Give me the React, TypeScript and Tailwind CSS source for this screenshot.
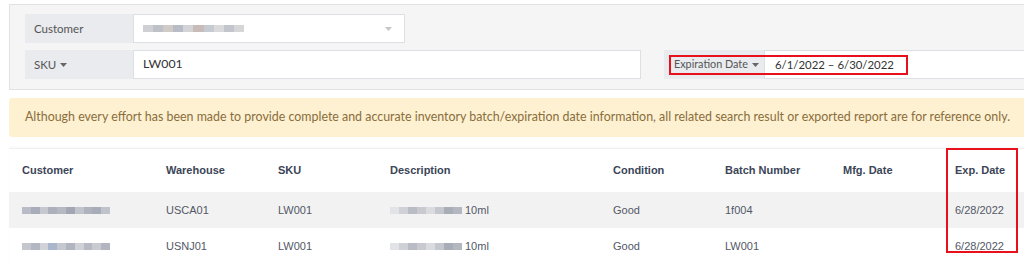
import React from "react";

const Blur = ({ w, colors }: { w: number; colors: string[] }) => (
  <span className="inline-flex h-[8px] items-center blur-[0.6px]" style={{ width: w }}>
    {colors.map((c, i) => (
      <span key={i} className="h-[7px] flex-1" style={{ backgroundColor: c }} />
    ))}
  </span>
);

const Caret = ({ className = "" }: { className?: string }) => (
  <svg width="7" height="4" viewBox="0 0 7 4" className={className}>
    <path d="M0 0 L7 0 L3.5 4 Z" fill="currentColor" />
  </svg>
);

const cols = [
  "w-[144px]",
  "w-[112px]",
  "w-[112px]",
  "w-[223px]",
  "w-[112px]",
  "w-[118px]",
  "w-[112px]",
  "w-[80px]",
];

const headers = ["Customer", "Warehouse", "SKU", "Description", "Condition", "Batch Number", "Mfg. Date", "Exp. Date"];

const rows = [
  {
    bg: "bg-[#f2f2f2]",
    wh: "USCA01",
    batch: "1f004",
    cust: ["#b9bcc6", "#a9adb9", "#c6c8cf", "#adb1bc", "#b6b9c2", "#a3a7b3", "#c2c4cb", "#b0b3bd", "#a8acb8", "#c0c3cb"],
  },
  {
    bg: "bg-white",
    wh: "USNJ01",
    batch: "LW001",
    cust: ["#c4c7ce", "#b3b7c1", "#d2d3d8", "#a9b6cc", "#c6c8cf", "#b1b5bf", "#d0d1d6", "#b7bac3", "#c9cbd1", "#b3b6c0"],
  },
];

export default function App() {
  return (
    <div className="h-[278px] w-[1024px] overflow-hidden bg-white" style={{ fontFamily: 'Lato, "Open Sans", sans-serif' }}>
      <div className="w-[1040px] pl-[9px] pt-[4px]">
        {/* Filter panel */}
        <div className="flex flex-col gap-[7px] border border-[#e2e2e2] bg-[#f5f5f5] pb-[10px] pl-[15px] pt-[9px]">
          <div className="flex h-[29px]">
            <div className="flex w-[108px] shrink-0 items-center bg-[#e9ebee] pl-[9px] text-[11.5px] text-[#555]">Customer</div>
            <div className="flex w-[272px] shrink-0 items-center justify-between border border-[#dcdfe3] bg-white pl-[9px] pr-[12px]">
              <Blur w={101} colors={["#cfd0d4", "#bfc1c8", "#d0cbc7", "#b8bcc7", "#d4d4d7", "#c7bcb7", "#c6cad1", "#dadadc", "#c3c5cc", "#d6d6d9"]} />
              <Caret className="text-[#c3c6cb]" />
            </div>
          </div>
          <div className="flex h-[29px]">
            <div className="flex w-[108px] shrink-0 items-center gap-[4px] bg-[#e9ebee] pl-[9px] text-[11.5px] text-[#555]">
              SKU <Caret className="text-[#666]" />
            </div>
            <div className="flex w-[508px] shrink-0 items-center border border-[#dcdfe3] bg-white pl-[9px] text-[12.3px] text-[#333]">LW001</div>
            <div className="relative ml-[23px] flex shrink-0">
              <div className="flex w-[100px] items-center gap-[4px] whitespace-nowrap bg-[#e9ebee] pl-[10px] text-[10.8px] text-[#555]">
                Expiration Date <Caret className="text-[#666]" />
              </div>
              <div className="flex w-[290px] items-center whitespace-nowrap border border-[#dcdfe3] bg-white pl-[10px] text-[11.4px] text-[#333]">
                6/1/2022 – 6/30/2022
              </div>
              <div className="pointer-events-none absolute left-[5px] top-[5px] h-[20px] w-[239px] border-2 border-[#e8101a]" />
            </div>
          </div>
        </div>

        {/* Warning */}
        <div className="mt-[8px] flex h-[39px] items-center whitespace-nowrap rounded-[3px] bg-[#fdf1d2] pl-[16px] text-[12.42px] text-[#8a6d3b]">
          Although every effort has been made to provide complete and accurate inventory batch/expiration date information, all related search result or exported report are for reference only.
        </div>

        {/* Table */}
        <div className="mt-[11px] border-t border-[#f0f0f0] bg-white shadow-[0_-1px_2px_rgba(0,0,0,0.03)]" style={{ fontFamily: '"Liberation Sans", Arial, sans-serif' }}>
          <div className="flex h-[43px] items-center pl-[13px] text-[11px] font-bold text-[#3b4557]">
            {headers.map((h, i) => (
              <div key={h} className={`${cols[i]} relative`}>
                {h}
                {i === 7 && (
                  <div className="pointer-events-none absolute left-[-9px] top-[-14px] h-[105px] w-[72px] border-2 border-[#e8101a]" />
                )}
              </div>
            ))}
          </div>
          {rows.map((r) => (
            <div key={r.wh} className={`flex h-[36px] items-center pl-[13px] text-[11px] text-[#525866] ${r.bg}`}>
              <div className={cols[0]}>
                <Blur w={88} colors={r.cust} />
              </div>
              <div className={cols[1]}>{r.wh}</div>
              <div className={cols[2]}>LW001</div>
              <div className={`${cols[3]} flex items-center gap-[3px]`}>
                <Blur w={72} colors={["#e2e3e6", "#cfd1d6", "#b9bcc4", "#c8cad0", "#dadbdf", "#c4c7ce", "#a9adb7", "#b3b7c0"]} />
                <span>10ml</span>
              </div>
              <div className={cols[4]}>Good</div>
              <div className={cols[5]}>{r.batch}</div>
              <div className={cols[6]}></div>
              <div className={cols[7]}>6/28/2022</div>
            </div>
          ))}
        </div>
      </div>
    </div>
  );
}
